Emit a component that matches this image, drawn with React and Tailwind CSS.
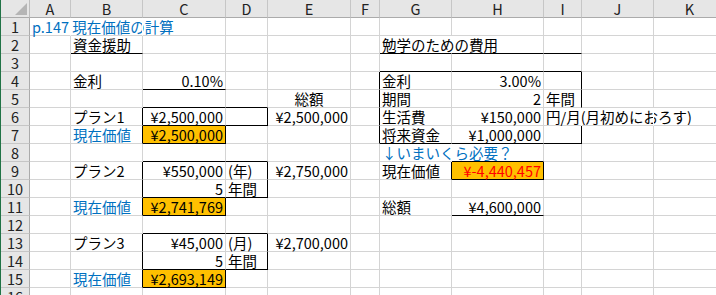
const COLS = ["A", "B", "C", "D", "E", "F", "G", "H", "I", "J", "K"];
const ROWS = Array.from({ length: 16 }, (_, i) => i + 1);

const BLUE = "text-[#0070c0]";
const ORANGE = "bg-[#ffc000]";

// a: alignment, br/bb: black right/bottom border, hr: hide gridline (text runs over)
const cells = {
  A1: { t: "p.147 現在価値の計算", c: BLUE, hr: true },
  B1: { hr: true },
  B2: { t: "資金援助", bb: true },
  G2: { t: "勉学のための費用", bb: true, hr: true },
  H2: { bb: true },
  I2: { bb: true },
  G3: { bb: true },
  H3: { bb: true },
  I3: { bb: true },
  B4: { t: "金利" },
  C4: { t: "0.10%", a: "r", bb: true },
  F4: { br: true },
  G4: { t: "金利" },
  H4: { t: "3.00%", a: "r" },
  I4: { br: true },
  C5: { bb: true },
  D5: { bb: true },
  E5: { t: "総額", a: "c" },
  F5: { br: true },
  G5: { t: "期間" },
  H5: { t: "2", a: "r" },
  I5: { t: "年間", br: true },
  B6: { t: "プラン1", br: true },
  C6: { t: "¥2,500,000", a: "r", bb: true },
  D6: { br: true, bb: true },
  E6: { t: "¥2,500,000", a: "r" },
  F6: { br: true },
  G6: { t: "生活費" },
  H6: { t: "¥150,000", a: "r" },
  I6: { t: "円/月(月初めにおろす)", hr: true },
  J6: { hr: true },
  B7: { t: "現在価値", c: BLUE, br: true },
  C7: { t: "¥2,500,000", a: "r", bg: ORANGE, br: true, bb: true },
  F7: { br: true },
  G7: { t: "将来資金", bb: true },
  H7: { t: "¥1,000,000", a: "r", bb: true },
  I7: { br: true, bb: true },
  C8: { bb: true },
  D8: { bb: true },
  G8: { t: "↓いまいくら必要？", c: BLUE, hr: true },
  H8: { bb: true },
  B9: { t: "プラン2", br: true },
  C9: { t: "¥550,000", a: "r" },
  D9: { t: "(年)", br: true },
  E9: { t: "¥2,750,000", a: "r" },
  G9: { t: "現在価値", br: true },
  H9: { t: "¥-4,440,457", a: "r", c: "text-[#ff0000]", bg: ORANGE, br: true, bb: true },
  B10: { br: true },
  C10: { t: "5", a: "r", bb: true },
  D10: { t: "年間", br: true, bb: true },
  B11: { t: "現在価値", c: BLUE, br: true },
  C11: { t: "¥2,741,769", a: "r", bg: ORANGE, br: true, bb: true },
  G11: { t: "総額" },
  H11: { t: "¥4,600,000", a: "r", bb: true },
  C12: { bb: true },
  D12: { bb: true },
  B13: { t: "プラン3", br: true },
  C13: { t: "¥45,000", a: "r" },
  D13: { t: "(月)", br: true },
  E13: { t: "¥2,700,000", a: "r" },
  B14: { br: true },
  C14: { t: "5", a: "r", bb: true },
  D14: { t: "年間", br: true, bb: true },
  B15: { t: "現在価値", c: BLUE, br: true },
  C15: { t: "¥2,693,149", a: "r", bg: ORANGE, br: true, bb: true },
};

function Cell({ id }) {
  const cell = cells[id] || {};
  const right = cell.br
    ? "border-r-black"
    : cell.hr
    ? "border-r-white"
    : "border-r-[#d4d4d4]";
  const bottom = cell.bb ? "border-b-black" : "border-b-[#d4d4d4]";
  const align =
    cell.a === "r"
      ? "justify-end pr-[2px]"
      : cell.a === "c"
      ? "justify-center"
      : "justify-start pl-[2px]";
  return (
    <div
      className={`relative z-10 flex h-[18px] items-center border-r border-b ${right} ${bottom} ${align} ${
        cell.bg || ""
      } ${cell.c || "text-black"}`}
    >
      {cell.t && (
        <span className="block whitespace-nowrap leading-[17px]">{cell.t}</span>
      )}
    </div>
  );
}

export default function App() {
  return (
    <div
      className="h-[295px] w-[716px] overflow-hidden border-l border-l-[#217346] bg-white text-[14.5px]"
      style={{ fontFamily: '"Noto Sans CJK JP", "Noto Sans", sans-serif' }}
    >
      <div className="grid grid-cols-[29px_41px_72px_83px_42px_83px_29px_72px_92px_38px_72px_72px]">
        {/* Corner */}
        <div className="flex h-[18px] items-end justify-end border-r border-b border-r-[#bdbdbd] border-b-[#ababab] bg-[#e6e6e6] pr-[2px] pb-[2px]">
          <svg width="12" height="12" viewBox="0 0 12 12">
            <polygon points="12,0 12,12 0,12" fill="#b5b5b5" />
          </svg>
        </div>

        {/* Column headers */}
        {COLS.map((c) => (
          <div
            key={c}
            className="flex h-[18px] items-center justify-center border-r border-b border-r-[#c6c6c6] border-b-[#ababab] bg-[#e6e6e6] text-[#222]"
          >
            <span className="block leading-[16px]">{c}</span>
          </div>
        ))}

        {ROWS.map((r) => (
          <div key={r} className="contents">
            <div className="flex h-[18px] items-center justify-center border-r border-b border-r-[#ababab] border-b-[#c6c6c6] bg-[#e6e6e6] text-[#222]">
              <span className="block leading-[16px]">{r}</span>
            </div>
            {COLS.map((c) => (
              <Cell key={c + r} id={c + r} />
            ))}
          </div>
        ))}
      </div>
    </div>
  );
}
